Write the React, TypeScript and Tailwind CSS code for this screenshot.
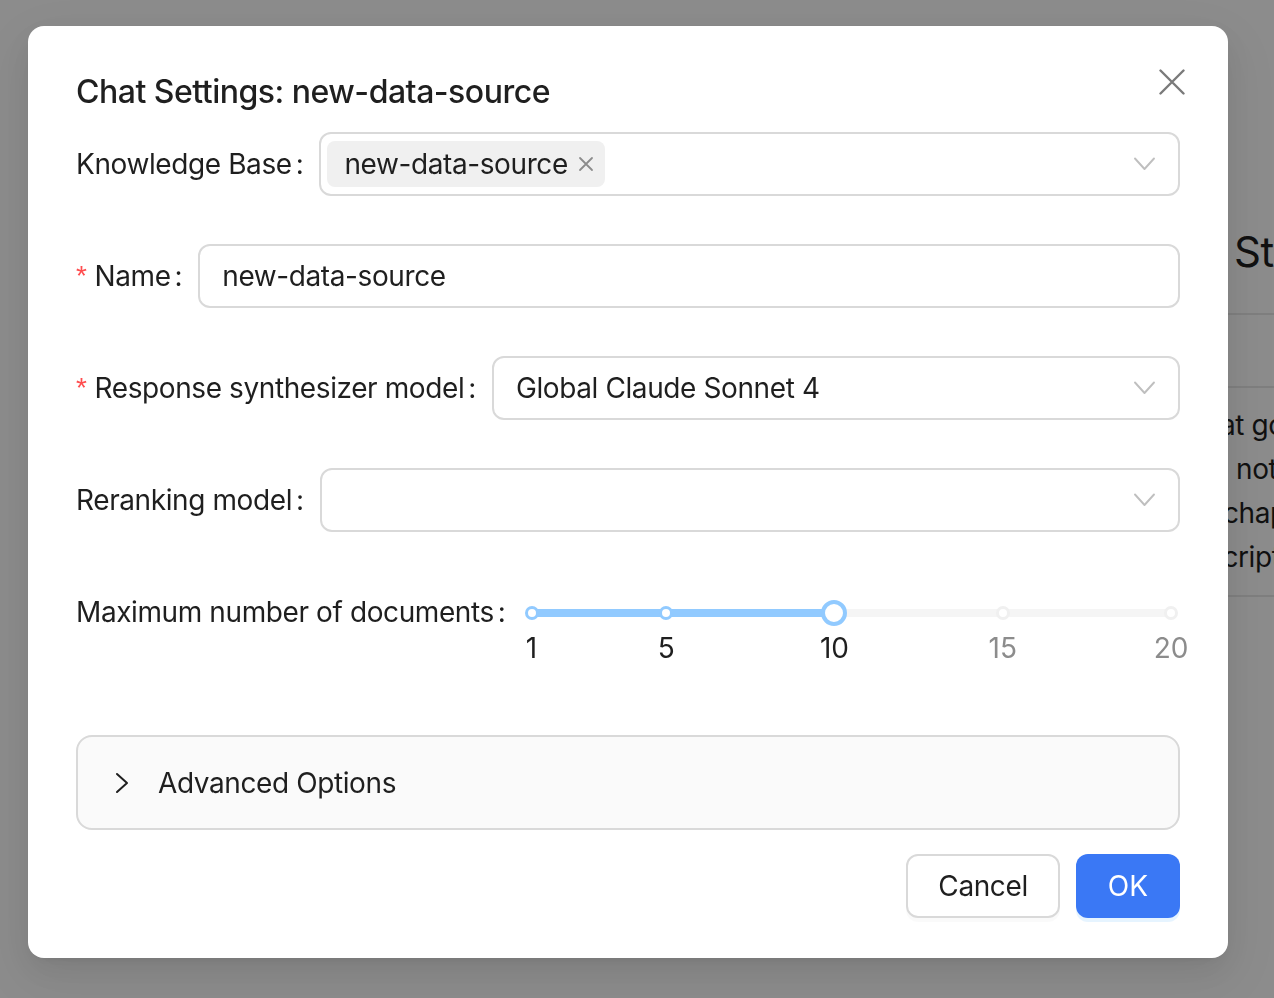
import React from "react";

const Chevron = () => (
  <svg width="24" height="14" viewBox="0 0 24 14" fill="none" className="shrink-0">
    <polyline points="3,1.5 12.5,12 22,1.5" stroke="#bfbfbf" strokeWidth="1.9" strokeLinecap="round" strokeLinejoin="round" />
  </svg>
);

const Label = ({ text, required }: { text: string; required?: boolean }) => (
  <div className="flex items-center shrink-0 text-[28px] tracking-[-0.4px] leading-[44px] text-[#1f1f1f]">
    {required && (
      <span className="mr-[8px] text-[#ff4d4f] font-['Liberation_Sans',sans-serif] text-[28px] leading-none">*</span>
    )}
    <span>{text}</span>
    <span className="ml-[4px] mr-[16px]">:</span>
  </div>
);

const marks = [1, 5, 10, 15, 20];
const value = 10;
const pct = (v: number) => ((v - 1) / 19) * 100;

export default function App() {
  return (
    <div className="relative w-[1274px] h-[998px] overflow-hidden bg-white font-['Inter',sans-serif]">
      {/* background page */}
      <div className="flex">
        <div className="w-[1160px] shrink-0" />
        <div className="w-[600px] shrink-0 pt-[228px] text-[#1f1f1f]">
          <div className="pl-[74px] text-[42px] leading-[48px] font-normal tracking-[-0.5px] whitespace-nowrap">Studio</div>
          <div className="mt-[37px] border-b-2 border-[#e8e8e8] h-[75px] border-t-2" />
          <div className="pt-[15px] pb-[16px] border-b-2 border-[#e8e8e8] text-[28px] tracking-[-0.4px] leading-[44px] whitespace-nowrap">
            <div className="pl-[35px]">that goes</div>
            <div className="pl-[76px]">not</div>
            <div className="pl-[63px]">chapter</div>
            <div className="pl-[48px]">script</div>
          </div>
        </div>
      </div>

      {/* overlay */}
      <div className="fixed inset-0 bg-black/45" />

      {/* modal */}
      <div className="fixed inset-0">
        <div className="relative ml-[28px] mt-[26px] w-[1200px] h-[932px] bg-white rounded-[16px] px-[48px] pt-[40px] pb-[40px] shadow-[0_12px_32px_0_rgba(0,0,0,0.08),0_6px_12px_-8px_rgba(0,0,0,0.12),0_18px_56px_16px_rgba(0,0,0,0.05)]">
          <button className="absolute top-[34px] right-[34px] w-[44px] h-[44px] flex items-center justify-center">
            <svg width="26" height="26" viewBox="0 0 26 26" fill="none">
              <path d="M1.5 1.5 L24.5 24.5 M24.5 1.5 L1.5 24.5" stroke="#7a7a7a" strokeWidth="2.4" strokeLinecap="round" />
            </svg>
          </button>

          <div className="pt-[2px] text-[32px] leading-[48px] font-medium tracking-[-0.5px] text-[#1f1f1f] mb-[16px]">Chat Settings: new-data-source</div>

          {/* Knowledge Base */}
          <div className="flex items-center h-[64px] mb-[48px]">
            <Label text="Knowledge Base" />
            <div className="flex-1 h-[64px] border-2 border-[#d9d9d9] rounded-[12px] flex items-center pl-[6px] pr-[22px]">
              <div className="flex items-center h-[46px] bg-[#f0f0f0] rounded-[8px] pl-[17px] pr-[11px] text-[28px] tracking-[-0.4px] text-[#1f1f1f]">
                <span>new-data-source</span>
                <svg width="16" height="16" viewBox="0 0 16 16" fill="none" className="ml-[10px]">
                  <path d="M2 2 L14 14 M14 2 L2 14" stroke="#8c8c8c" strokeWidth="1.8" strokeLinecap="round" />
                </svg>
              </div>
              <div className="flex-1" />
              <Chevron />
            </div>
          </div>

          {/* Name */}
          <div className="flex items-center h-[64px] mb-[48px]">
            <Label text="Name" required />
            <div className="flex-1 h-[64px] border-2 border-[#d9d9d9] rounded-[12px] flex items-center px-[22px] text-[28px] tracking-[-0.4px] text-[#1f1f1f]">
              new-data-source
            </div>
          </div>

          {/* Response synthesizer model */}
          <div className="flex items-center h-[64px] mb-[48px]">
            <Label text="Response synthesizer model" required />
            <div className="flex-1 h-[64px] border-2 border-[#d9d9d9] rounded-[12px] flex items-center pl-[22px] pr-[22px] text-[28px] tracking-[-0.4px] text-[#1f1f1f]">
              <span className="flex-1">Global Claude Sonnet 4</span>
              <Chevron />
            </div>
          </div>

          {/* Reranking model */}
          <div className="flex items-center h-[64px] mb-[48px]">
            <Label text="Reranking model" />
            <div className="flex-1 h-[64px] border-2 border-[#d9d9d9] rounded-[12px] flex items-center justify-end pr-[22px]">
              <Chevron />
            </div>
          </div>

          {/* Slider */}
          <div className="flex items-center h-[64px]">
            <Label text="Maximum number of documents" />
            <div className="flex-1 h-[64px] pl-[10px] pr-[9px]">
              <div className="relative h-[64px]">
                <div className="absolute left-0 right-0 top-[29px] h-[8px] rounded-full bg-[#f5f5f5]" />
                <div className="absolute left-0 top-[29px] h-[8px] rounded-full bg-[#91caff]" style={{ width: `${pct(value)}%` }} />
                {marks.map((m) => (
                  <div
                    key={`d${m}`}
                    className={`absolute top-[26px] w-[14px] h-[14px] -ml-[7px] rounded-full bg-white border-[3px] ${m <= value ? "border-[#91caff]" : "border-[#f0f0f0]"}`}
                    style={{ left: `${pct(m)}%` }}
                  />
                ))}
                <div
                  className="absolute top-[20px] w-[26px] h-[26px] -ml-[13px] rounded-full bg-white border-[4px] border-[#91caff]"
                  style={{ left: `${pct(value)}%` }}
                />
                {marks.map((m) => (
                  <div
                    key={`l${m}`}
                    className={`absolute top-[46px] -translate-x-1/2 text-[28px] leading-[44px] ${m <= value ? "text-[#1f1f1f]" : "text-[#8c8c8c]"}`}
                    style={{ left: `${pct(m)}%` }}
                  >
                    {m}
                  </div>
                ))}
              </div>
            </div>
          </div>

          {/* Advanced options */}
          <div className="mt-[91px] h-[95px] border-2 border-[#d9d9d9] bg-[#fafafa] rounded-[16px] flex items-center pl-[32px] text-[28px] tracking-[-0.4px] text-[#1f1f1f]">
            <svg width="24" height="24" viewBox="0 0 24 24" fill="none" className="mr-[24px]">
              <polyline points="7,3 17,12 7,21" stroke="#1f1f1f" strokeWidth="2" strokeLinecap="round" strokeLinejoin="round" />
            </svg>
            <span>Advanced Options</span>
          </div>

          {/* Footer */}
          <div className="mt-[24px] flex justify-end gap-[16px]">
            <button className="h-[64px] px-[30px] border-2 border-[#d9d9d9] rounded-[12px] bg-white text-[28px] tracking-[-0.4px] text-[#1f1f1f] shadow-[0_4px_0_rgba(0,0,0,0.02)]">
              Cancel
            </button>
            <button className="h-[64px] px-[32px] rounded-[12px] bg-[#3a78f5] text-[28px] text-white shadow-[0_4px_0_rgba(5,145,255,0.1)]">
              OK
            </button>
          </div>
        </div>
      </div>
    </div>
  );
}
